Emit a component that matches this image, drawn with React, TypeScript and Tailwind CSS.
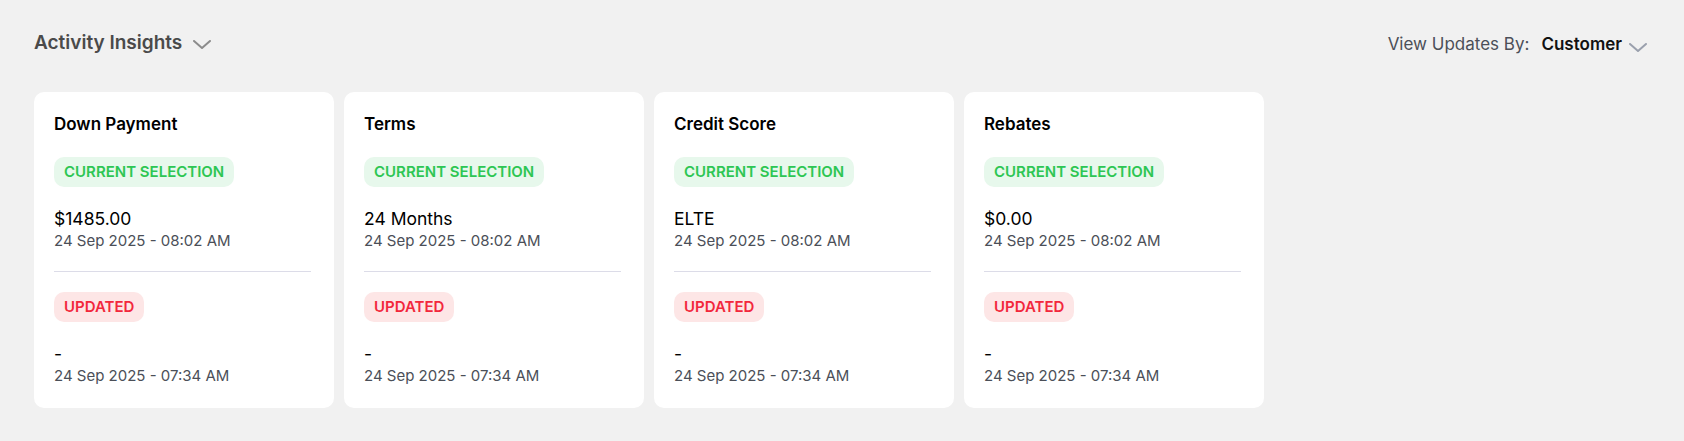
const cards = [
  { title: "Down Payment", current: "$1485.00" },
  { title: "Terms", current: "24 Months" },
  { title: "Credit Score", current: "ELTE" },
  { title: "Rebates", current: "$0.00" },
]

function Chevron({ className }: { className?: string }) {
  return (
    <svg viewBox="0 0 18 9" fill="none" className={className}>
      <path d="M1 1l8 7 8-7" stroke="currentColor" strokeWidth="2" strokeLinecap="round" strokeLinejoin="round" />
    </svg>
  )
}

function InsightCard({ title, current }: { title: string; current: string }) {
  return (
    <div className="w-[300px] h-[316px] rounded-[10px] bg-white px-5 pt-5 flex flex-col">
      <h3 className="text-[17px] leading-6 font-semibold text-black">{title}</h3>
      <div className="mt-[21px]">
        <span className="inline-flex items-center h-[30px] px-[10px] rounded-[10px] bg-[#e7f8ec] text-[#2dc653] text-[15px] font-semibold">
          CURRENT SELECTION
        </span>
      </div>
      <p className="mt-5 text-[17.5px] leading-6 text-black">{current}</p>
      <p className="text-[15px] leading-5 text-[#4b4f58]">24 Sep 2025 - 08:02 AM</p>
      <div className="mt-5 mr-[3px] h-px bg-[#dcdce8]" />
      <div className="mt-5">
        <span className="inline-flex items-center h-[30px] px-[10px] rounded-[10px] bg-[#fde6e6] text-[#f2283c] text-[15px] font-semibold">
          UPDATED
        </span>
      </div>
      <p className="mt-5 text-[17.5px] leading-6 text-black">-</p>
      <p className="text-[15px] leading-5 text-[#4b4f58]">24 Sep 2025 - 07:34 AM</p>
    </div>
  )
}

export default function App() {
  return (
    <div className="min-h-[441px] bg-[#f1f1f1] pl-[34px] pr-[37px] pt-7 font-['Inter',sans-serif]">
      <div className="flex items-center justify-between h-7">
        <div className="flex items-center gap-[11px] pt-[2px]">
          <h2 className="text-[19px] font-semibold text-[#4a4a4a]">Activity Insights</h2>
          <Chevron className="w-[18px] h-[9px] text-[#8c8c8c] mt-[2px]" />
        </div>
        <div className="flex items-center pt-[6px]">
          <span className="text-[17px] text-[#4b4f58]">View Updates By:</span>
          <span className="ml-3 text-[17px] font-semibold text-[#111]">Customer</span>
          <Chevron className="ml-[7px] w-[18px] h-[9px] text-[#9aa0ad] mt-[4px]" />
        </div>
      </div>
      <div className="mt-[36px] flex gap-[10px]">
        {cards.map((c) => (
          <InsightCard key={c.title} title={c.title} current={c.current} />
        ))}
      </div>
    </div>
  )
}
